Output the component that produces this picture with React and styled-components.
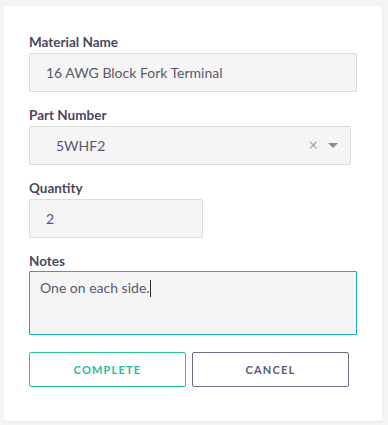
import React from 'react';
import styled, { createGlobalStyle } from 'styled-components';

const GlobalStyle = createGlobalStyle`
  html, body {
    margin: 0;
    padding: 0;
    background: #f4f4f4;
    font-family: Lato, "Open Sans", sans-serif;
  }
`;

const Page = styled.div`
  padding: 6px 6px 5px 4px;
`;

const Card = styled.div`
  background: #ffffff;
  border-radius: 3px;
  box-shadow: 0 1px 2px rgba(0, 0, 0, 0.06);
  padding: 27px 25px 34px 25px;
`;

const Field = styled.div`
  display: flex;
  flex-direction: column;
  margin-bottom: 14px;
`;

const Label = styled.label`
  font-size: 13.5px;
  line-height: 18px;
  font-weight: 700;
  color: #4a4860;
  margin-bottom: 2px;
`;

const Input = styled.div`
  box-sizing: border-box;
  width: ${p => p.$width}px;
  height: 39px;
  display: flex;
  align-items: center;
  padding: 0 16px;
  background: #f5f5f5;
  border: 1px solid #dcdcdc;
  border-radius: 2px;
  font-size: 14px;
  color: #5a5870;
`;

const Select = styled(Input)`
  padding: 0 12px 0 26px;
`;

const SelectValue = styled.span`
  flex: 1;
`;

const Clear = styled.span`
  color: #a8a8b0;
  font-size: 17px;
  margin-right: 10px;
  margin-top: -2px;
`;

const Arrow = styled.span`
  width: 0;
  height: 0;
  border-left: 5px solid transparent;
  border-right: 5px solid transparent;
  border-top: 5px solid #8a8a92;
`;

const TextArea = styled.div`
  box-sizing: border-box;
  width: 328px;
  height: 64px;
  margin-top: -1px;
  padding: 6px 10px;
  background: #f5f5f5;
  border: 1px solid #17aebb;
  border-radius: 1px;
  font-size: 14px;
  line-height: 20px;
  color: #5a5870;
`;

const Caret = styled.span`
  display: inline-block;
  width: 1px;
  height: 17px;
  background: #2a2838;
  vertical-align: -4px;
`;

const Buttons = styled.div`
  display: flex;
  gap: 6px;
  margin-top: 17px;
`;

const Button = styled.button`
  box-sizing: border-box;
  width: ${p => p.$width}px;
  height: 35px;
  background: #ffffff;
  border: 1px solid ${p => p.$border};
  border-radius: 2px;
  color: ${p => p.$color};
  font-family: inherit;
  font-size: 11px;
  font-weight: 700;
  letter-spacing: 1.2px;
  padding: 0;
`;

const App = () => {
  return (
    <Page>
      <GlobalStyle />
      <Card>
        <Field>
          <Label>Material Name</Label>
          <Input $width={328}>16 AWG Block Fork Terminal</Input>
        </Field>
        <Field>
          <Label>Part Number</Label>
          <Select $width={322}>
            <SelectValue>5WHF2</SelectValue>
            <Clear>×</Clear>
            <Arrow />
          </Select>
        </Field>
        <Field>
          <Label>Quantity</Label>
          <Input $width={174}>2</Input>
        </Field>
        <Field>
          <Label>Notes</Label>
          <TextArea>One on each side.<Caret /></TextArea>
        </Field>
        <Buttons>
          <Button $width={157} $border="#2ec48e" $color="#1fbf9c">COMPLETE</Button>
          <Button $width={157} $border="#6e6b82" $color="#5c5a72">CANCEL</Button>
        </Buttons>
      </Card>
    </Page>
  );
};

export default App;
